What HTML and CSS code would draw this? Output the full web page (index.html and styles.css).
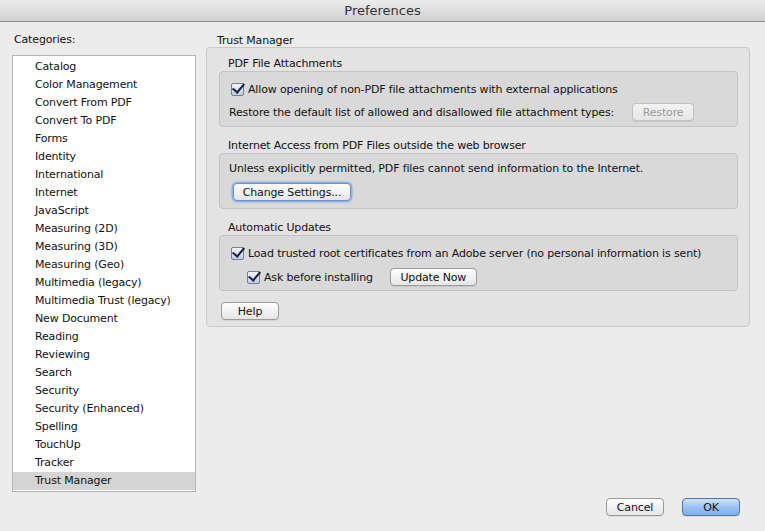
FILE: index.html
```html
<!DOCTYPE html>
<html lang="en">
<head>
    <meta charset="UTF-8">
    <title>Preferences</title>
    <link rel="stylesheet" href="styles.css">
</head>
<body>
    <div class="window">
        <div class="titlebar">Preferences</div>

        <div class="main">
            <div class="sidebar">
                <div class="side-label">Categories:</div>
                <ul class="cat-list">
                    <li>Catalog</li>
                    <li>Color Management</li>
                    <li>Convert From PDF</li>
                    <li>Convert To PDF</li>
                    <li>Forms</li>
                    <li>Identity</li>
                    <li>International</li>
                    <li>Internet</li>
                    <li>JavaScript</li>
                    <li>Measuring (2D)</li>
                    <li>Measuring (3D)</li>
                    <li>Measuring (Geo)</li>
                    <li>Multimedia (legacy)</li>
                    <li>Multimedia Trust (legacy)</li>
                    <li>New Document</li>
                    <li>Reading</li>
                    <li>Reviewing</li>
                    <li>Search</li>
                    <li>Security</li>
                    <li>Security (Enhanced)</li>
                    <li>Spelling</li>
                    <li>TouchUp</li>
                    <li>Tracker</li>
                    <li class="selected">Trust Manager</li>
                </ul>
            </div>

            <div class="panel">
                <div class="panel-label">Trust Manager</div>
                <div class="group">
                    <div class="sub-label">PDF File Attachments</div>
                    <div class="box">
                        <label class="check-row">
                            <span class="check"></span>
                            Allow opening of non-PDF file attachments with external applications
                        </label>
                        <div class="row">
                            <span>Restore the default list of allowed and disallowed file attachment types:</span>
                            <button class="btn disabled restore">Restore</button>
                        </div>
                    </div>

                    <div class="sub-label">Internet Access from PDF Files outside the web browser</div>
                    <div class="box">
                        <div class="text-row">Unless explicitly permitted, PDF files cannot send information to the Internet.</div>
                        <button class="btn focused change">Change Settings...</button>
                    </div>

                    <div class="sub-label">Automatic Updates</div>
                    <div class="box last">
                        <label class="check-row">
                            <span class="check"></span>
                            Load trusted root certificates from an Adobe server (no personal information is sent)
                        </label>
                        <div class="row indent">
                            <label class="check-row inline">
                                <span class="check"></span>
                                Ask before installing
                            </label>
                            <button class="btn update">Update Now</button>
                        </div>
                    </div>

                    <button class="btn help">Help</button>
                </div>
            </div>
        </div>

        <div class="footer">
            <button class="btn cancel">Cancel</button>
            <button class="btn default ok">OK</button>
        </div>
    </div>
</body>
</html>
```

FILE: styles.css
```css
* {
    margin: 0;
    padding: 0;
    box-sizing: border-box;
}

body {
    font-family: 'DejaVu Sans', 'Liberation Sans', sans-serif;
    font-size: 11px;
    letter-spacing: -0.15px;
    color: #111;
    background: #ececec;
}

.window {
    width: 765px;
    height: 531px;
    background: #ececec;
    display: flex;
    flex-direction: column;
    white-space: nowrap;
}

/* Заголовок окна */
.titlebar {
    height: 22px;
    line-height: 21px;
    text-align: center;
    font-size: 13px;
    letter-spacing: 0;
    color: #333;
    background: linear-gradient(#ececec, #d0d0d0);
    border-bottom: 1px solid #8e8e8e;
}

.main {
    display: flex;
    flex: 1;
}

/* Список категорий */
.sidebar {
    width: 206px;
    padding: 11px 0 0 12px;
}

.side-label {
    padding-left: 2px;
    height: 22px;
    line-height: 14px;
}

.cat-list {
    list-style: none;
    width: 184px;
    height: 437px;
    background: #fff;
    border: 1px solid #b5b5b5;
    padding-top: 2px;
}

.cat-list li {
    height: 18px;
    line-height: 18px;
    padding-left: 22px;
}

.cat-list li.selected {
    background: #d4d4d4;
}

/* Правая панель */
.panel {
    width: 544px;
    padding-top: 12px;
}

.panel-label {
    padding-left: 11px;
    height: 13px;
    line-height: 13px;
}

.group {
    background: #e3e3e3;
    border: 1px solid #c9c9c9;
    border-radius: 4px;
    padding: 9px 11px 6px 12px;
    height: 280px;
}

.sub-label {
    padding-left: 9px;
    height: 14px;
    line-height: 14px;
}

.box {
    background: #d9d9d9;
    border: 1px solid #c3c3c3;
    border-radius: 4px;
    height: 56px;
    padding: 6px 0 0 11px;
    margin-bottom: 12px;
}

.box.last {
    margin-bottom: 11px;
}

.check-row {
    display: flex;
    align-items: center;
    gap: 4px;
    height: 22px;
}

.check-row.inline {
    display: inline-flex;
}

.check {
    width: 13px;
    height: 13px;
    border: 1px solid #7c7c8c;
    border-radius: 2px;
    background: linear-gradient(#f4f7fc, #b9cbe8);
    position: relative;
}

.check::after {
    content: '';
    position: absolute;
    left: 3px;
    top: -3px;
    width: 5px;
    height: 10px;
    border-right: 2.5px solid #1a1f3a;
    border-bottom: 2.5px solid #1a1f3a;
    transform: rotate(40deg);
}

.row {
    display: flex;
    align-items: center;
    height: 22px;
    margin-top: 1px;
    margin-left: -2px;
}

.row.indent {
    margin-left: 16px;
    height: 24px;
}

.text-row {
    height: 18px;
    line-height: 18px;
    margin-left: -2px;
    margin-bottom: 5px;
}

/* Кнопки */
.btn {
    font-family: inherit;
    font-size: 11px;
    letter-spacing: -0.15px;
    color: #111;
    height: 18px;
    border: 1px solid #9a9a9a;
    border-radius: 4px;
    background: linear-gradient(#ffffff, #f1f1f1 50%, #e6e6e6);
    box-shadow: 0 1px 0 rgba(0, 0, 0, 0.08);
}

.btn.disabled {
    color: #9a9a9a;
    border-color: #c0c0c0;
    background: linear-gradient(#f3f3f3, #e6e6e6);
}

.btn.focused {
    border-color: #6d8fc4;
    box-shadow: 0 0 0 1.5px #8fb2e8;
}

.btn.default {
    border-color: #5073a8;
    background: linear-gradient(#cde2fb, #9cc3f2 50%, #7fb0ee);
}

.restore {
    width: 62px;
    margin-left: 18px;
}

.change {
    width: 118px;
    margin-left: 2px;
}

.update {
    width: 87px;
    margin-left: 17px;
}

.help {
    width: 58px;
    margin-left: 2px;
}

/* Нижние кнопки */
.footer {
    display: flex;
    justify-content: flex-end;
    gap: 18px;
    padding: 0 25px 15px 0;
}

.cancel,
.ok {
    width: 58px;
}
```
